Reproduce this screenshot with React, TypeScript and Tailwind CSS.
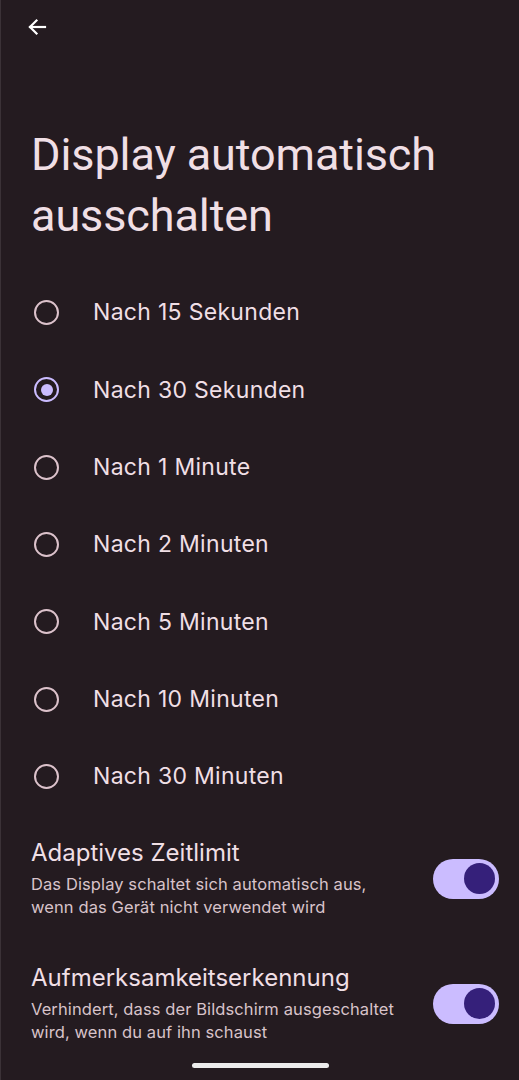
import { useState } from 'react'

const optionen = [
  'Nach 15 Sekunden',
  'Nach 30 Sekunden',
  'Nach 1 Minute',
  'Nach 2 Minuten',
  'Nach 5 Minuten',
  'Nach 10 Minuten',
  'Nach 30 Minuten',
]

function Radio({ checked }: { checked: boolean }) {
  return (
    <span
      className={`flex h-[25px] w-[25px] items-center justify-center rounded-full border-[2.5px] ${
        checked ? 'border-[#cbbcff]' : 'border-[#dcc2cb]'
      }`}
    >
      {checked && <span className="h-[12px] w-[12px] rounded-full bg-[#cbbcff]" />}
    </span>
  )
}

function Toggle({ on }: { on: boolean }) {
  return (
    <span
      className={`flex h-[40px] w-[66px] shrink-0 items-center rounded-full px-[4px] ${
        on ? 'justify-end bg-[#cbbcff]' : 'justify-start bg-[#3a3035]'
      }`}
    >
      <span className="h-[31px] w-[31px] rounded-full bg-[#35207a]" />
    </span>
  )
}

function SwitchRow({ title, lines }: { title: string; lines: string[] }) {
  return (
    <div className="flex items-center gap-4 pr-[20px]">
      <div className="min-w-0 flex-1">
        <p className="text-[24px] leading-[30px] text-[#f0dfe5]">{title}</p>
        <p className="mt-[5px] text-[16.5px] leading-[23px] tracking-[0.1px] text-[#d8c3ca]">
          {lines.map((l) => (
            <span key={l} className="block whitespace-nowrap">
              {l}
            </span>
          ))}
        </p>
      </div>
      <Toggle on />
    </div>
  )
}

export default function App() {
  const [selected, setSelected] = useState(1)

  return (
    <div
      className="relative h-[1080px] w-[519px] overflow-hidden border-l border-[#3b3237] bg-[#241b20] text-[#f0dfe5]"
      style={{ fontFamily: 'Inter, Roboto, sans-serif' }}
    >
      <div className="flex h-[54px] items-center pl-[24px]">
        <svg width="24" height="24" viewBox="0 0 24 24" fill="none" stroke="#ffffff" strokeWidth="2.2" strokeLinecap="square">
          <path d="M20 12H5" />
          <path d="M11.5 5.5 5 12l6.5 6.5" />
        </svg>
      </div>

      <h1
        className="mt-[70px] pl-[30px] text-[45px] font-normal leading-[61px] tracking-[-0.1px] text-[#f0dfe5]"
        style={{ fontFamily: 'Roboto, sans-serif' }}
      >
        Display automatisch ausschalten
      </h1>

      <div className="mt-[28px]">
        {optionen.map((o, i) => (
          <button
            key={o}
            type="button"
            onClick={() => setSelected(i)}
            className="flex h-[77.3px] w-full items-center text-left"
          >
            <span className="flex w-[92px] justify-center pr-[1px]">
              <Radio checked={i === selected} />
            </span>
            <span className="text-[23px] tracking-[0.3px] text-[#f0dfe5]">{o}</span>
          </button>
        ))}
      </div>

      <div className="mt-[23px] flex flex-col gap-[44px] pl-[30px]">
        <SwitchRow
          title="Adaptives Zeitlimit"
          lines={['Das Display schaltet sich automatisch aus,', 'wenn das Gerät nicht verwendet wird']}
        />
        <SwitchRow
          title="Aufmerksamkeitserkennung"
          lines={['Verhindert, dass der Bildschirm ausgeschaltet', 'wird, wenn du auf ihn schaust']}
        />
      </div>

      <div className="absolute bottom-[12px] left-0 right-0 flex justify-center">
        <span className="h-[5px] w-[137px] rounded-full bg-[#ececec]" />
      </div>
    </div>
  )
}
